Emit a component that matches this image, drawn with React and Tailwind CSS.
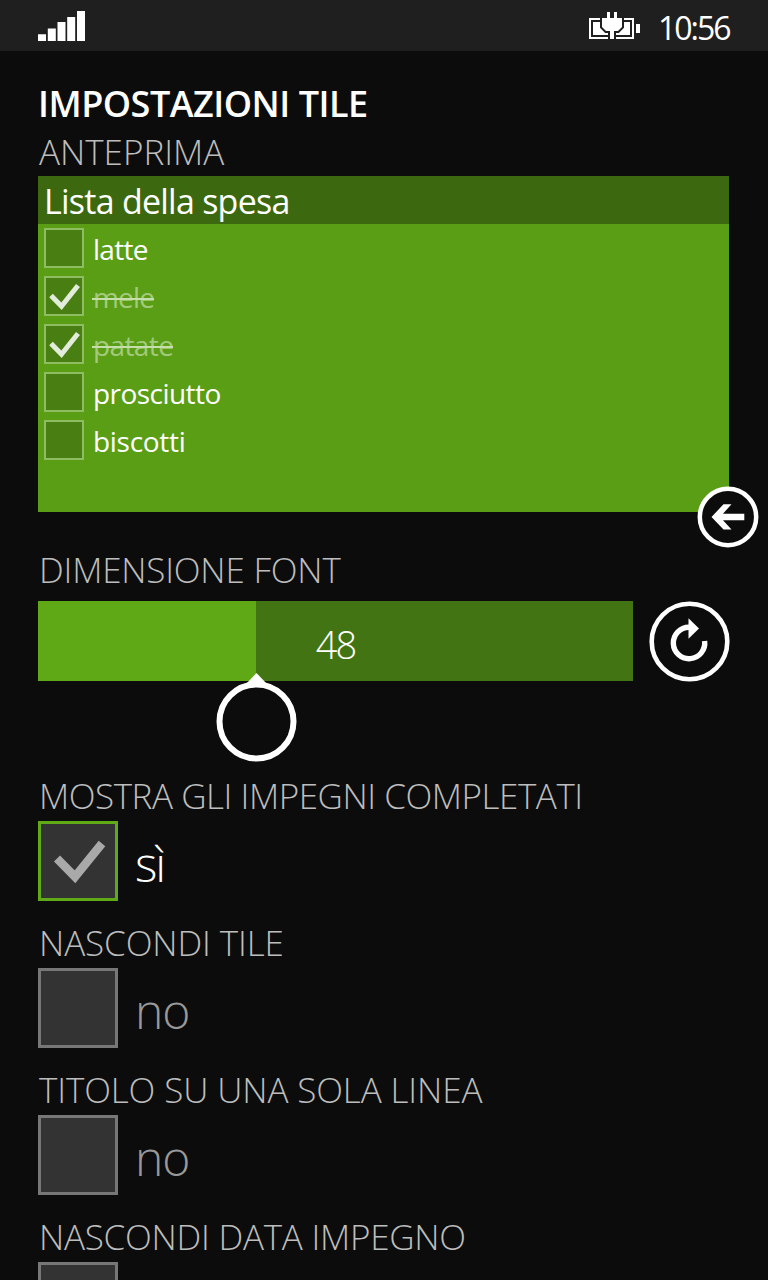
const CAPTION = "h-[49px] whitespace-nowrap pl-px text-[35px] font-light leading-[50px] text-[#bdbdbd]";

const tasks = [
  { text: "latte", done: false, track: "tracking-[-0.7px]" },
  { text: "mele", done: true, track: "tracking-[-0.8px]" },
  { text: "patate", done: true, track: "tracking-[-0.6px]" },
  { text: "prosciutto", done: false, track: "tracking-[-0.55px]" },
  { text: "biscotti", done: false, track: "tracking-[-0.3px]" },
];

const options = [
  { label: "MOSTRA GLI IMPEGNI COMPLETATI", track: "tracking-[-0.45px]", on: true, state: "sì" },
  { label: "NASCONDI TILE", track: "tracking-[-0.1px]", on: false, state: "no" },
  { label: "TITOLO SU UNA SOLA LINEA", track: "tracking-[-0.12px]", on: false, state: "no" },
  { label: "NASCONDI DATA IMPEGNO", track: "tracking-[-0.25px]", on: false },
];

function SignalIcon() {
  return (
    <svg className="h-[30px] w-[47px]" viewBox="0 0 47 30" fill="#fff">
      <path d="M0 23.3h8V30H0zM9.8 17.5h8V30h-8zM19.5 11h8v19h-8zM29.2 6h8v24h-8zM39 0h8v30h-8z" />
    </svg>
  );
}

function BatteryIcon() {
  return (
    <svg className="h-[28px] w-[52px]" viewBox="0 0 52 28" fill="#fff">
      <path d="M0 6h45v21H0zM2 8v17h41V8z" fillRule="evenodd" />
      <path d="M4 10h37v13H4z" />
      <path d="M13 6h20v9l-4 4h-4v9h-4v-9h-4l-4-4z" stroke="#1f1f1f" strokeWidth="4" />
      <path d="M18 0h3v6h4V0h3v6h5v9l-4 4h-4v8h-4v-8h-4l-4-4V6h5z" />
      <path d="M47 12h4v9h-4z" />
    </svg>
  );
}

function Header() {
  return (
    <header className="flex h-[51px] items-start justify-between bg-[#1f1f1f] pl-[38px] pr-[39px]">
      <div className="pt-[11px]"><SignalIcon /></div>
      <div className="flex items-start gap-[17px]">
        <div className="pt-[12px]"><BatteryIcon /></div>
        <div className="w-[71px] whitespace-nowrap pt-[3px] text-[32px] font-normal leading-[50px] tracking-[-2px] text-white">10:56</div>
      </div>
    </header>
  );
}

function Preview() {
  return (
    <section className="relative h-[336px] w-[691px] bg-[#5a9e16]">
      <h2 className="h-[48px] whitespace-nowrap bg-[#3c690f] pl-[6px] text-[34px] font-normal leading-[51px] tracking-[-0.75px] text-white">Lista della spesa</h2>
      <ul>
        {tasks.map((t) => (
          <li key={t.text} className="flex h-[48px] items-center pl-[6px]">
            <div className="h-[40px] w-[40px] border-2 border-[#8fbd61] bg-[#487e12]">
              {t.done && (
                <svg className="h-[36px] w-[36px]" viewBox="0 0 36 36" fill="none" stroke="#e3ebdb" strokeWidth="5">
                  <path d="M5 17.5L15.5 28.3L32 7.5" />
                </svg>
              )}
            </div>
            <div className={"relative ml-[9px] h-[48px] whitespace-nowrap text-[28px] leading-[50px] " + t.track + (t.done ? " text-[#a3ca7b]" : " text-white")}>
              {t.text}
              {t.done && <span className="absolute -left-px right-0 top-[26px] h-[2px] bg-[#c5deac]" />}
            </div>
          </li>
        ))}
      </ul>
      <button className="absolute left-[659px] top-[310px] h-[62px] w-[62px]" aria-label="indietro">
        <svg viewBox="0 0 62 62" className="h-[62px] w-[62px]">
          <circle cx="31" cy="31" r="28.2" fill="#0c0c0c" stroke="#fff" strokeWidth="4.5" />
          <path d="M14.5 31L26.5 18.2H34.5L26 27.7H47.3V34.3H26L34.5 43.5H26.5Z" fill="#fff" />
        </svg>
      </button>
    </section>
  );
}

function FontSlider() {
  return (
    <div className="flex gap-[16px]">
      <div className="relative h-[80px] w-[595px] bg-[#437414]">
        <div className="h-[80px] w-[218px] bg-[#5fa917]" />
        <div className="absolute inset-0 text-center text-[38px] font-light leading-[86px] tracking-[-2px] text-white">48</div>
        <svg className="absolute left-[177px] top-[72px] h-[90px] w-[82px]" viewBox="0 0 82 90">
          <path d="M41.5 0L52 11H31z" fill="#fff" />
          <circle cx="41.5" cy="48.5" r="37" fill="#0c0c0c" stroke="#fff" strokeWidth="6" />
        </svg>
      </div>
      <svg className="h-[81px] w-[81px]" viewBox="0 0 81 81">
        <circle cx="40.5" cy="40.5" r="37.8" fill="none" stroke="#fff" strokeWidth="4.6" />
        <path d="M40 26.3A15.7 15.7 0 1 0 55.6 40" fill="none" stroke="#fff" strokeWidth="5.4" />
        <path d="M39.5 17.3L50 27.5L39.5 37.7z" fill="#fff" />
      </svg>
    </div>
  );
}

function Option({ label, track, on, state }) {
  return (
    <div className="h-[147px]">
      <div className={CAPTION + " " + track}>{label}</div>
      <div className="mt-px flex">
        <div className={"h-[80px] w-[80px] shrink-0 border-[3px] bg-[#333] " + (on ? "border-[#60a917]" : "border-[#777]")}>
          {on && (
            <svg className="h-[74px] w-[74px]" viewBox="0 0 74 74" fill="none" stroke="#a9a9a9" strokeWidth="8.5">
              <path d="M16 34.5L34 52.8L61 19.5" />
            </svg>
          )}
        </div>
        {state && (
          <div className={"ml-[17px] h-[80px] text-[48px] font-light leading-[86px] " + (on ? "tracking-[-2px] text-white" : "tracking-[-1px] text-[#999]")}>{state}</div>
        )}
      </div>
    </div>
  );
}

export default function App() {
  return (
    <div className="h-[1280px] w-[768px] overflow-hidden bg-[#0c0c0c] font-['Open_Sans','Noto_Sans',sans-serif]">
      <Header />
      <main className="pl-[38px] pt-[27px]">
        <h1 className="mb-px h-[48px] whitespace-nowrap text-[36px] font-semibold leading-[51px] tracking-[-0.5px] text-white">IMPOSTAZIONI TILE</h1>
        <div className={CAPTION + " tracking-[0px]"}>ANTEPRIMA</div>
        <Preview />
        <div className={CAPTION + " mb-[7px] mt-[33px] tracking-[-0.2px]"}>DIMENSIONE FONT</div>
        <FontSlider />
        <div className="mt-[89px]">
          {options.map((o) => <Option key={o.label} {...o} />)}
        </div>
      </main>
    </div>
  );
}
